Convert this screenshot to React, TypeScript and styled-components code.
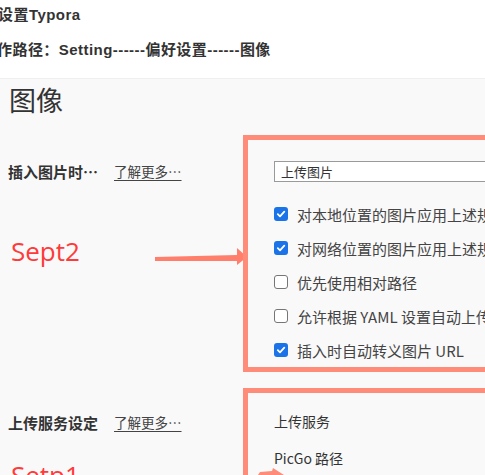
import React from "react";
import styled, { createGlobalStyle } from "styled-components";

const Global = createGlobalStyle`
  html, body { margin: 0; padding: 0; background: #ffffff; overflow: hidden; }
  body { width: 485px; height: 475px; }
`;

const CJK = `"Noto Sans CJK SC", "Noto Sans", sans-serif`;
const SALMON = "#ff8b79";

const Page = styled.div`
  width: 485px;
  height: 475px;
  overflow: hidden;
  display: flex;
  flex-direction: column;
`;

const Intro = styled.div`
  flex: none;
  height: 79px;
  box-sizing: border-box;
  padding-top: 5px;
  display: flex;
  flex-direction: column;
  gap: 15px;
  border-bottom: 1px solid #efefef;
  background: #fff;
`;

const IntroLine = styled.div<{ $shift: number }>`
  font-family: "Liberation Sans", ${CJK};
  font-weight: bold;
  font-size: 15px;
  line-height: 20px;
  letter-spacing: 0.45px;
  color: #333;
  white-space: nowrap;
  margin-left: ${(p) => p.$shift}px;
`;

const Panel = styled.div`
  flex: 1 0 auto;
  background: #f9f9f9;
  padding-top: 3px;
  display: flex;
  flex-direction: column;
`;

const Title = styled.h1`
  margin: 0 0 17px 0;
  padding-left: 9px;
  font-family: ${CJK};
  font-weight: 400;
  font-size: 27px;
  line-height: 36px;
  color: #333;
`;

const Section = styled.div<{ $gap?: number }>`
  display: grid;
  grid-template-columns: 243px 420px;
  margin-bottom: ${(p) => p.$gap ?? 0}px;
`;

const LeftCol = styled.div<{ $pt: number }>`
  padding-top: ${(p) => p.$pt}px;
  padding-left: 8px;
  display: flex;
  flex-direction: column;
`;

const LabelRow = styled.div`
  display: flex;
  gap: 16px;
  align-items: center;
  height: 20px;
  white-space: nowrap;
`;

const Label = styled.span`
  font-family: ${CJK};
  font-weight: bold;
  font-size: 15px;
  color: #333;
`;

const MoreLink = styled.a`
  font-family: ${CJK};
  font-size: 13.5px;
  color: #444;
  text-decoration: underline;
  text-underline-offset: 3px;
`;

const Annotation = styled.div<{ $mt: number }>`
  margin-top: ${(p) => p.$mt}px;
  display: flex;
  align-items: center;
  justify-content: space-between;
`;

const StepText = styled.span`
  padding-left: 3px;
  font-family: "Open Sans", "Noto Sans", sans-serif;
  font-size: 26px;
  line-height: 36px;
  color: #ff3a3a;
`;

const ArrowSvg = styled.svg`
  margin-right: -4px;
  margin-top: 10px;
  display: block;
`;

const Box = styled.div<{ $pt: number }>`
  position: relative;
  border: 5px solid ${SALMON};
  padding: ${(p) => p.$pt}px 0 0 26px;
  display: flex;
  flex-direction: column;
  min-height: 100px;
`;

const Select = styled.div`
  height: 21px;
  width: 330px;
  box-sizing: border-box;
  border: 1px solid #9a9a9a;
  background: #fff;
  font-family: ${CJK};
  font-size: 13px;
  line-height: 19px;
  color: #333;
  padding-left: 6px;
`;

const CheckList = styled.div`
  margin-top: 15px;
  display: flex;
  flex-direction: column;
`;

const CheckRow = styled.label`
  height: 34px;
  display: flex;
  align-items: center;
  gap: 9px;
  font-family: ${CJK};
  font-size: 15px;
  color: #444;
  white-space: nowrap;
`;

const Check = styled.span<{ $on: boolean }>`
  width: 14px;
  height: 14px;
  box-sizing: border-box;
  border-radius: 3px;
  flex: none;
  display: flex;
  align-items: center;
  justify-content: center;
  background: ${(p) => (p.$on ? "#1a73e8" : "#fff")};
  border: ${(p) => (p.$on ? "none" : "1px solid #767676")};
`;

const FieldList = styled.div`
  display: flex;
  flex-direction: column;
  gap: 17px;
`;

const Field = styled.div`
  font-family: ${CJK};
  font-size: 14px;
  line-height: 20px;
  color: #333;
  white-space: nowrap;
`;

const PeekArrow = styled.svg`
  position: absolute;
  left: 10px;
  top: 75px;
`;

const CheckBox = ({ on, children }: { on: boolean; children: React.ReactNode }) => (
  <CheckRow>
    <Check $on={on}>
      {on && (
        <svg width="10" height="10" viewBox="0 0 10 10">
          <path d="M1.8 5.2 L4 7.3 L8.3 2.6" fill="none" stroke="#fff" strokeWidth="1.8" strokeLinecap="round" strokeLinejoin="round" />
        </svg>
      )}
    </Check>
    <span>{children}</span>
  </CheckRow>
);

export default function App() {
  return (
    <Page>
      <Global />
      <Intro>
        <IntroLine $shift={-2}>设置Typora</IntroLine>
        <IntroLine $shift={-3}>作路径：Setting------偏好设置------图像</IntroLine>
      </Intro>
      <Panel>
        <Title>图像</Title>
        <Section $gap={16}>
          <LeftCol $pt={26}>
            <LabelRow>
              <Label>插入图片时…</Label>
              <MoreLink>了解更多…</MoreLink>
            </LabelRow>
            <Annotation $mt={52}>
              <StepText>Sept2</StepText>
              <ArrowSvg width="92" height="19" viewBox="0 0 92 19">
                <polygon points="0,10 82,8 82,1 92,10 82,18 82,14 0,14" fill="#ff7f6c" />
              </ArrowSvg>
            </Annotation>
          </LeftCol>
          <Box $pt={21}>
            <Select>上传图片</Select>
            <CheckList>
              <CheckBox on>对本地位置的图片应用上述规则</CheckBox>
              <CheckBox on>对网络位置的图片应用上述规则</CheckBox>
              <CheckBox on={false}>优先使用相对路径</CheckBox>
              <CheckBox on={false}>允许根据 YAML 设置自动上传图片</CheckBox>
              <CheckBox on>插入时自动转义图片 URL</CheckBox>
            </CheckList>
          </Box>
        </Section>
        <Section>
          <LeftCol $pt={24}>
            <LabelRow>
              <Label>上传服务设定</Label>
              <MoreLink>了解更多…</MoreLink>
            </LabelRow>
            <Annotation $mt={25}>
              <StepText>Setp1</StepText>
            </Annotation>
          </LeftCol>
          <Box $pt={18}>
            <FieldList>
              <Field>上传服务</Field>
              <Field>PicGo 路径</Field>
            </FieldList>
            <PeekArrow width="26" height="10" viewBox="0 0 26 10">
              <polygon points="0,7 2,4 14,3 15,0 26,7 26,10 0,10" fill="#ff8b79" />
            </PeekArrow>
          </Box>
        </Section>
      </Panel>
    </Page>
  );
}
